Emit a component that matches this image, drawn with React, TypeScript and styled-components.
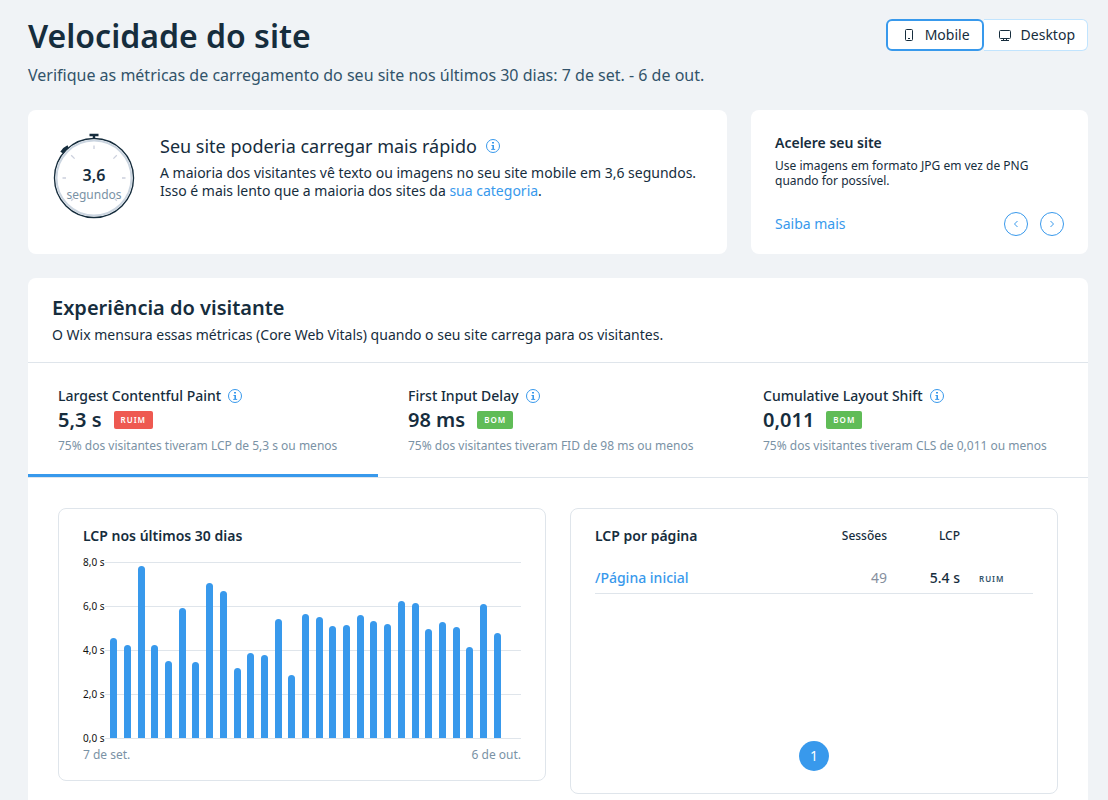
import React from "react";
import styled, { createGlobalStyle } from "styled-components";

const c = {
  bg: "#f0f3f6",
  ink: "#162d3d",
  sub: "#32536a",
  muted: "#868f9e",
  mutedBlue: "#7a92a5",
  blue: "#3899ec",
  line: "#dfe5eb",
};

const GlobalStyle = createGlobalStyle`
  * { box-sizing: border-box; }
  body { margin: 0; background: ${c.bg}; color: ${c.ink}; font-family: "Noto Sans", sans-serif; font-weight: 400; }
  h1, h2, h3, p { margin: 0; }
  button { font: inherit; color: inherit; cursor: pointer; }
  a { color: ${c.blue}; text-decoration: none; }
`;

const Page = styled.main`
  padding: 16px 20px 0 28px;
`;

const Header = styled.header`
  display: flex;
  justify-content: space-between;
  align-items: flex-start;
  margin-bottom: 23px;
`;

const Title = styled.h1`
  font-size: 32px;
  line-height: 40px;
  font-weight: 600;
`;

const Subtitle = styled.p`
  margin-top: 7px;
  font-size: 16px;
  line-height: 24px;
  color: ${c.sub};
`;

const Toggle = styled.div`
  display: flex;
  margin-top: 3px;
`;

const ToggleButton = styled.button<{ $active?: boolean }>`
  display: flex;
  align-items: center;
  gap: 7px;
  height: 32px;
  padding: 0 12px;
  font-size: 14px;
  line-height: 20px;
  background: #fff;
  border: ${(p) => (p.$active ? `2px solid ${c.blue}` : "1px solid #c1e4fe")};
  border-left-width: ${(p) => (p.$active ? "2px" : "0")};
  border-radius: ${(p) => (p.$active ? "6px" : "0 6px 6px 0")};
  svg { flex: none; }
`;

const card = `
  background: #fff;
  border-radius: 8px;
`;

const TopCards = styled.div`
  display: grid;
  grid-template-columns: minmax(0, 699fr) minmax(0, 337fr);
  gap: 24px;
  margin-bottom: 24px;
`;

const SummaryCard = styled.section`
  ${card}
  display: flex;
  gap: 24px;
  min-height: 144px;
  padding: 22px 24px;
`;

const Watch = styled.div`
  display: grid;
  flex: none;
  width: 84px;
  height: 88px;
  > * { grid-area: 1 / 1; }
`;

const WatchText = styled.div`
  display: flex;
  flex-direction: column;
  align-items: center;
  padding-top: 33px;
`;

const WatchValue = styled.strong`
  font-size: 16px;
  line-height: 20px;
  font-weight: 600;
`;

const WatchUnit = styled.span`
  font-size: 12px;
  line-height: 20px;
  color: ${c.mutedBlue};
`;

const SummaryBody = styled.div`
  min-width: 0;
  padding-top: 2px;
`;

const SummaryTitle = styled.h2`
  display: flex;
  align-items: center;
  gap: 8px;
  font-size: 18px;
  line-height: 24px;
  font-weight: 400;
`;

const SummaryText = styled.p`
  margin-top: 6px;
  font-size: 14px;
  line-height: 18px;
`;

const InfoButton = styled.button`
  display: inline-flex;
  padding: 0;
  border: 0;
  background: none;
  color: ${c.blue};
`;

const TipCard = styled.section`
  ${card}
  display: flex;
  flex-direction: column;
  padding: 23px 24px 18px;
`;

const TipTitle = styled.h2`
  font-size: 14px;
  line-height: 20px;
  font-weight: 600;
`;

const TipText = styled.p`
  margin-top: 5px;
  max-width: 270px;
  font-size: 12px;
  line-height: 15px;
`;

const TipFooter = styled.div`
  display: flex;
  align-items: center;
  justify-content: space-between;
  margin-top: auto;
  font-size: 14px;
  line-height: 24px;
`;

const Pager = styled.div`
  display: flex;
  gap: 12px;
`;

const RoundButton = styled.button`
  display: grid;
  place-items: center;
  width: 24px;
  height: 24px;
  padding: 0;
  color: ${c.blue};
  background: #fff;
  border: 1px solid ${c.blue};
  border-radius: 50%;
`;

const Experience = styled.section`
  ${card}
  border-radius: 8px 8px 0 0;
`;

const ExperienceHeader = styled.div`
  padding: 16px 24px 17px;
  border-bottom: 1px solid ${c.line};
`;

const SectionTitle = styled.h2`
  font-size: 20px;
  line-height: 28px;
  font-weight: 600;
`;

const SectionText = styled.p`
  margin-top: 3px;
  font-size: 14px;
  line-height: 20px;
`;

const Tabs = styled.div`
  display: grid;
  grid-template-columns: 70fr 71fr 71fr;
  border-bottom: 1px solid ${c.line};
`;

const Tab = styled.div<{ $active?: boolean }>`
  padding: 23px 30px 18px;
  border-bottom: 3px solid ${(p) => (p.$active ? c.blue : "transparent")};
`;

const TabName = styled.div`
  display: flex;
  align-items: center;
  gap: 6px;
  font-size: 14px;
  line-height: 20px;
  font-weight: 500;
`;

const TabValue = styled.div`
  display: flex;
  align-items: center;
  gap: 12px;
  font-size: 20px;
  line-height: 28px;
  font-weight: 600;
`;

const Badge = styled.span<{ $tone: "bad" | "good" | "plain" }>`
  display: inline-block;
  padding: 0 ${(p) => (p.$tone === "plain" ? "0" : "7px")};
  font-size: 8px;
  line-height: 18px;
  font-weight: 600;
  letter-spacing: 1px;
  border-radius: 2px;
  color: ${(p) => (p.$tone === "plain" ? c.sub : "#fff")};
  background: ${(p) => ({ bad: "#ee5951", good: "#60bc57", plain: "none" })[p.$tone]};
`;

const TabNote = styled.p`
  margin-top: 2px;
  font-size: 12px;
  line-height: 20px;
  color: ${c.mutedBlue};
`;

const Panels = styled.div`
  display: grid;
  grid-template-columns: repeat(2, minmax(0, 1fr));
  align-items: start;
  gap: 24px;
  padding: 30px;
`;

const Panel = styled.section`
  border: 1px solid ${c.line};
  border-radius: 8px;
  padding: 17px 24px;
`;

const PanelTitle = styled.h3`
  font-size: 14px;
  line-height: 20px;
  font-weight: 600;
`;

const Chart = styled.div`
  display: grid;
  grid-template-columns: 22px minmax(0, 1fr);
  margin-top: 8px;
`;

const Axis = styled.div`
  display: flex;
  flex-direction: column;
  justify-content: space-between;
  height: 193px;
  font-size: 10px;
  line-height: 17px;
  color: #111;
  white-space: nowrap;
`;

const Plot = styled.div`
  display: grid;
  height: 177px;
  margin: 8px 0;
  > * { grid-area: 1 / 1; }
`;

const GridLines = styled.div`
  display: flex;
  flex-direction: column;
  justify-content: space-between;
`;

const GridLine = styled.div`
  height: 1px;
  background: ${c.line};
`;

const Bars = styled.div`
  display: grid;
  grid-template-columns: repeat(29, 1fr);
  align-items: end;
  justify-items: center;
  padding: 0 17px 1px 2px;
`;

const Bar = styled.div`
  width: 7px;
  background: ${c.blue};
  border-radius: 4px 4px 0 0;
`;

const DateRange = styled.div`
  display: flex;
  justify-content: space-between;
  font-size: 12px;
  line-height: 16px;
  color: ${c.mutedBlue};
`;

const PageTable = styled.table`
  width: 100%;
  border-collapse: collapse;
  table-layout: fixed;
  th, td { padding: 0; text-align: right; font-weight: 500; }
  th { height: 20px; font-size: 12px; line-height: 18px; }
  th:first-child, td:first-child { text-align: left; }
  td { padding-top: 17px; height: 47px; font-size: 14px; line-height: 20px; border-bottom: 1px solid ${c.line}; }
  td:nth-child(2) { color: ${c.muted}; font-weight: 400; }
  td:last-child { padding-left: 19px; text-align: left; }
`;

const Pagination = styled.nav`
  display: flex;
  justify-content: center;
  margin-top: 147px;
  padding-bottom: 5px;
`;

const PageButton = styled.button`
  width: 30px;
  height: 30px;
  padding: 0;
  border: 0;
  border-radius: 50%;
  background: ${c.blue};
  color: #fff;
  font-size: 14px;
  line-height: 30px;
`;

const Info = () => (
  <InfoButton type="button" aria-label="Mais informações">
    <svg width="16" height="16" viewBox="0 0 16 16" fill="none" stroke="currentColor">
      <circle cx="8" cy="8" r="6.5" />
      <path d="M7 4.8h2" strokeWidth="1.6" />
      <path d="M6.5 7.5H8" />
      <path d="M8.2 7v4" strokeWidth="1.6" />
      <path d="M6.2 11.4h4" />
    </svg>
  </InfoButton>
);

const Stopwatch = () => (
  <svg width="84" height="88" viewBox="0 0 84 88" fill="none" aria-hidden="true">
    <path d="M37.5 3h9M42 3v3.5" stroke={c.ink} strokeWidth="2.4" />
    <path d="M9.8 20.6q2-3.8 6.4-5.8" stroke={c.ink} strokeWidth="3.4" />
    <circle cx="42" cy="46" r="39.5" fill="#fff" stroke={c.ink} strokeWidth="1.4" />
    <circle cx="42" cy="46" r="37.5" stroke="#cbd5e0" strokeWidth="2" />
    <path
      d="M42 13.5v3.5M64.8 23.2l-3.4 3.4M19.2 23.2l3.4 3.4M10.5 46h3.5M73.5 46H70M64.8 68.8l-2-2M19.2 68.8l2-2"
      stroke="#cbd0dd"
      strokeWidth="1.3"
    />
  </svg>
);

const metrics = [
  { name: "Largest Contentful Paint", value: "5,3 s", tone: "bad", tag: "RUIM", note: "75% dos visitantes tiveram LCP de 5,3 s ou menos" },
  { name: "First Input Delay", value: "98 ms", tone: "good", tag: "BOM", note: "75% dos visitantes tiveram FID de 98 ms ou menos" },
  { name: "Cumulative Layout Shift", value: "0,011", tone: "good", tag: "BOM", note: "75% dos visitantes tiveram CLS de 0,011 ou menos" },
] as const;

const MAX_SECONDS = 8;
const lcpByDay = [
  4.55, 4.25, 7.82, 4.23, 3.52, 5.92, 3.44, 7.05, 6.67, 3.18, 3.86, 3.77, 5.4, 2.86, 5.64, 5.5,
  5.08, 5.12, 5.6, 5.33, 5.18, 6.24, 6.15, 4.94, 5.27, 5.04, 4.15, 6.1, 4.77,
];

export default function App() {
  return (
    <Page>
      <GlobalStyle />
      <Header>
        <div>
          <Title>Velocidade do site</Title>
          <Subtitle>
            Verifique as métricas de carregamento do seu site nos últimos 30 dias: 7 de set. - 6 de out.
          </Subtitle>
        </div>
        <Toggle role="group" aria-label="Dispositivo">
          <ToggleButton type="button" $active aria-pressed="true">
            <svg width="18" height="18" viewBox="0 0 18 18" fill="none" stroke="currentColor">
              <rect x="5.5" y="3.5" width="7" height="11" rx="1" />
              <path d="M8 12.5h2" />
            </svg>
            Mobile
          </ToggleButton>
          <ToggleButton type="button" aria-pressed="false">
            <svg width="18" height="18" viewBox="0 0 18 18" fill="none" stroke="currentColor">
              <rect x="3.5" y="4.5" width="11" height="8" rx="1" />
              <path d="M5 14.5h8M7.5 12.5v2M10.5 12.5v2" />
            </svg>
            Desktop
          </ToggleButton>
        </Toggle>
      </Header>

      <TopCards>
        <SummaryCard>
          <Watch>
            <Stopwatch />
            <WatchText>
              <WatchValue>3,6</WatchValue>
              <WatchUnit>segundos</WatchUnit>
            </WatchText>
          </Watch>
          <SummaryBody>
            <SummaryTitle>
              Seu site poderia carregar mais rápido
              <Info />
            </SummaryTitle>
            <SummaryText>
              A maioria dos visitantes vê texto ou imagens no seu site mobile em 3,6 segundos.
              <br />
              Isso é mais lento que a maioria dos sites da <a href="#categoria">sua categoria</a>.
            </SummaryText>
          </SummaryBody>
        </SummaryCard>
        <TipCard>
          <TipTitle>Acelere seu site</TipTitle>
          <TipText>Use imagens em formato JPG em vez de PNG quando for possível.</TipText>
          <TipFooter>
            <a href="#saiba-mais">Saiba mais</a>
            <Pager>
              <RoundButton type="button" aria-label="Anterior">
                <svg width="8" height="8" viewBox="0 0 8 8" fill="none" stroke="currentColor">
                  <path d="M5.5 1L2.5 4l3 3" />
                </svg>
              </RoundButton>
              <RoundButton type="button" aria-label="Próximo">
                <svg width="8" height="8" viewBox="0 0 8 8" fill="none" stroke="currentColor">
                  <path d="M2.5 1l3 3-3 3" />
                </svg>
              </RoundButton>
            </Pager>
          </TipFooter>
        </TipCard>
      </TopCards>

      <Experience>
        <ExperienceHeader>
          <SectionTitle>Experiência do visitante</SectionTitle>
          <SectionText>
            O Wix mensura essas métricas (Core Web Vitals) quando o seu site carrega para os visitantes.
          </SectionText>
        </ExperienceHeader>
        <Tabs>
          {metrics.map((m, i) => (
            <Tab key={m.name} $active={i === 0}>
              <TabName>
                {m.name}
                <Info />
              </TabName>
              <TabValue>
                {m.value}
                <Badge $tone={m.tone}>{m.tag}</Badge>
              </TabValue>
              <TabNote>{m.note}</TabNote>
            </Tab>
          ))}
        </Tabs>
        <Panels>
          <Panel>
            <PanelTitle>LCP nos últimos 30 dias</PanelTitle>
            <Chart>
              <Axis>
                {["8,0 s", "6,0 s", "4,0 s", "2,0 s", "0,0 s"].map((t) => (
                  <span key={t}>{t}</span>
                ))}
              </Axis>
              <Plot>
                <GridLines>
                  {[8, 6, 4, 2, 0].map((v) => (
                    <GridLine key={v} />
                  ))}
                </GridLines>
                <Bars>
                  {lcpByDay.map((v, i) => (
                    <Bar key={i} style={{ height: `${(v / MAX_SECONDS) * 100}%` }} />
                  ))}
                </Bars>
              </Plot>
            </Chart>
            <DateRange>
              <span>7 de set.</span>
              <span>6 de out.</span>
            </DateRange>
          </Panel>
          <Panel>
            <PageTable>
              <colgroup>
                <col />
                <col width="73" />
                <col width="73" />
                <col width="73" />
              </colgroup>
              <thead>
                <tr>
                  <th scope="col">
                    <PanelTitle>LCP por página</PanelTitle>
                  </th>
                  <th scope="col">Sessões</th>
                  <th scope="col">LCP</th>
                  <th aria-label="Avaliação" />
                </tr>
              </thead>
              <tbody>
                <tr>
                  <td>
                    <a href="#pagina-inicial">/Página inicial</a>
                  </td>
                  <td>49</td>
                  <td>5.4 s</td>
                  <td>
                    <Badge $tone="plain">RUIM</Badge>
                  </td>
                </tr>
              </tbody>
            </PageTable>
            <Pagination aria-label="Paginação">
              <PageButton type="button" aria-current="page">1</PageButton>
            </Pagination>
          </Panel>
        </Panels>
      </Experience>
    </Page>
  );
}
